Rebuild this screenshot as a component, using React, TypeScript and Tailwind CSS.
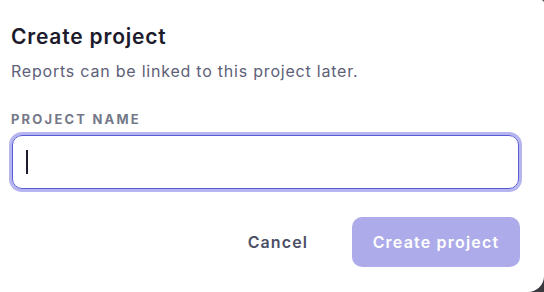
import React, { useState } from 'react';

const App: React.FC = () => {
    const [name, setName] = useState('');

    return (
        <div className="w-[544px] h-[292px] bg-[#3b3b3f] overflow-hidden" style={{ fontFamily: 'Inter, "Noto Sans", sans-serif' }}>
            <div className="w-[544px] h-[292px] bg-white rounded-br-[16px] rounded-tr-[3px] pl-[11px] pr-[24px] pt-[23px] flex flex-col">
                <h3 className="text-[21px] leading-[28px] font-semibold text-[#1c1b2b] tracking-[0.8px]">Create project</h3>
                <p className="mt-[9px] text-[16px] leading-[22px] text-[#5d6078] tracking-[0.78px]">Reports can be linked to this project later.</p>

                <label className="mt-[29px] text-[13px] leading-[16px] font-bold text-[#747888] uppercase tracking-[2.2px]">Project name</label>
                <div className="relative mt-[8px] ml-[1px] w-[507px]">
                    <input
                        autoFocus
                        type="text"
                        value={name}
                        aria-label="Project name"
                        onChange={(e) => setName(e.target.value)}
                        className="w-full h-[54px] px-[15px] rounded-[10px] border border-[#5b5bd6] ring-[3px] ring-[#b7b5ef] outline-none text-[16px] text-[#1c1b2b] caret-transparent"
                    />
                    {name === '' && <span className="absolute left-[14px] top-[15px] w-[1.5px] h-[24px] bg-[#1c1b2b]" />}
                </div>

                <div className="mt-[28px] flex items-center justify-end gap-[44px]">
                    <button type="button" className="text-[16px] font-semibold text-[#4c5066] tracking-[1.1px]">Cancel</button>
                    <button
                        type="button"
                        disabled
                        className="w-[168px] h-[50px] rounded-[10px] bg-[#adabe9] text-white text-[16px] font-semibold tracking-[1.2px]"
                    >
                        Create project
                    </button>
                </div>
            </div>
        </div>
    );
};

export default App;
